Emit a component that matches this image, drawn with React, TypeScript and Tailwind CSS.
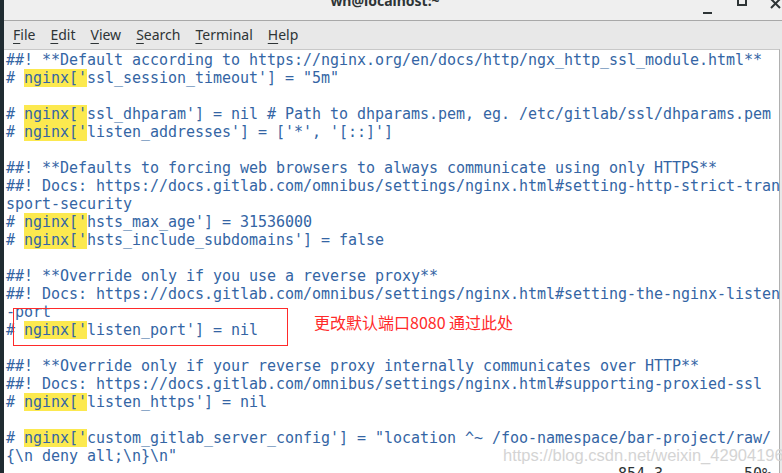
import React from "react";

type Row = { pre?: string; hl?: string; rest?: string; text?: string };

const rows: Row[] = [
  { text: "##! **Default according to https://nginx.org/en/docs/http/ngx_http_ssl_module.html**" },
  { pre: "# ", hl: "nginx['", rest: "ssl_session_timeout'] = \"5m\"" },
  { text: "" },
  { pre: "# ", hl: "nginx['", rest: "ssl_dhparam'] = nil # Path to dhparams.pem, eg. /etc/gitlab/ssl/dhparams.pem" },
  { pre: "# ", hl: "nginx['", rest: "listen_addresses'] = ['*', '[::]']" },
  { text: "" },
  { text: "##! **Defaults to forcing web browsers to always communicate using only HTTPS**" },
  { text: "##! Docs: https://docs.gitlab.com/omnibus/settings/nginx.html#setting-http-strict-tran" },
  { text: "sport-security" },
  { pre: "# ", hl: "nginx['", rest: "hsts_max_age'] = 31536000" },
  { pre: "# ", hl: "nginx['", rest: "hsts_include_subdomains'] = false" },
  { text: "" },
  { text: "##! **Override only if you use a reverse proxy**" },
  { text: "##! Docs: https://docs.gitlab.com/omnibus/settings/nginx.html#setting-the-nginx-listen" },
  { text: "-port" },
  { pre: "# ", hl: "nginx['", rest: "listen_port'] = nil" },
  { text: "" },
  { text: "##! **Override only if your reverse proxy internally communicates over HTTP**" },
  { text: "##! Docs: https://docs.gitlab.com/omnibus/settings/nginx.html#supporting-proxied-ssl" },
  { pre: "# ", hl: "nginx['", rest: "listen_https'] = nil" },
  { text: "" },
  { pre: "# ", hl: "nginx['", rest: "custom_gitlab_server_config'] = \"location ^~ /foo-namespace/bar-project/raw/" },
  { text: "{\\n deny all;\\n}\\n\"" },
];

const menus = [
  { k: "F", r: "ile" },
  { k: "E", r: "dit" },
  { k: "V", r: "iew" },
  { k: "S", r: "earch" },
  { k: "T", r: "erminal" },
  { k: "H", r: "elp" },
];

export default function App() {
  return (
    <div className="relative flex h-[473px] w-[782px] overflow-hidden bg-[#e8e8e8]">
      <div className="h-full w-[4px] shrink-0 bg-[#1f2b31]" />
      <div className="flex min-w-0 flex-1 flex-col">
        {/* title bar */}
        <div className="flex h-[21px] shrink-0 items-start overflow-hidden border-b border-[#a8a8a8] bg-[#efefef]">
          <div className="flex-1" />
          <div
            className="ml-[-16px] mt-[-8px] whitespace-nowrap text-[14px] font-bold leading-[18px] text-[#2e3436]"
            style={{ fontFamily: "'Noto Sans', 'DejaVu Sans', sans-serif" }}
          >
            wh@localhost:~
          </div>
          <div className="flex flex-1 items-start justify-end">
            <div className="mt-[12px] h-[2px] w-[9px] shrink-0 bg-[#2e3436]" />
            <div className="ml-[25px] mt-[-3px] h-[9px] w-[10px] shrink-0 border-2 border-[#2e3436]" />
            <svg className="ml-[23px] mr-[1px] mt-[-2px] shrink-0" width="11" height="11" viewBox="0 0 11 11">
              <path d="M1 1 L10 10 M10 1 L1 10" stroke="#2e3436" strokeWidth="2" />
            </svg>
          </div>
        </div>
        {/* menu bar */}
        <div
          className="flex h-[28px] shrink-0 items-center gap-[15px] bg-[#e8e8e8] pl-[9px] text-[14px] text-[#2e3436]"
          style={{ fontFamily: "'Noto Sans', 'DejaVu Sans', sans-serif" }}
        >
          {menus.map((m) => (
            <span key={m.k} className="leading-[20px]">
              <span className="underline decoration-1 underline-offset-[3px]">{m.k}</span>
              {m.r}
            </span>
          ))}
        </div>
        {/* terminal */}
        <div className="relative mr-[2px] flex-1 border-t border-r border-[#c8c8c8] border-r-[#b0b0b0] bg-white pl-[2px] pt-[1px]">
          <div
            className="text-[15px] tracking-[-0.03px] text-[#3465a4]"
            style={{ fontFamily: "'DejaVu Sans Mono', monospace" }}
          >
            {rows.map((r, i) => (
              <div key={i} className="h-[18px] whitespace-pre leading-[18px]">
                {r.text !== undefined ? (
                  r.text
                ) : (
                  <>
                    {r.pre}
                    <span className="inline-block h-[18px] bg-[#fce94f] align-top">{r.hl}</span>
                    {r.rest}
                  </>
                )}
              </div>
            ))}
            <div className="flex h-[18px] whitespace-pre leading-[18px] text-[#2e3436]">
              <span className="ml-[612px]">854,3</span>
              <span className="ml-[81px]">50%</span>
            </div>
          </div>
          {/* red annotation box */}
          <div className="absolute left-[9px] top-[258px] h-[38px] w-[275px] border border-[#ff2a2a]" />
          <div
            className="absolute left-[310px] top-[262px] text-[16px] leading-[20px] text-[#ff2a2a]"
            style={{ fontFamily: "'Noto Sans CJK SC', sans-serif" }}
          >
            更改默认端口8080 通过此处
          </div>
          {/* watermark */}
          <div
            className="absolute left-[499px] top-[395px] text-[16.5px] leading-[20px] text-[#d4d4d4]"
            style={{ fontFamily: "'Liberation Sans', Arial, sans-serif" }}
          >
            https://blog.csdn.net/weixin_42904196
          </div>
        </div>
      </div>
    </div>
  );
}
